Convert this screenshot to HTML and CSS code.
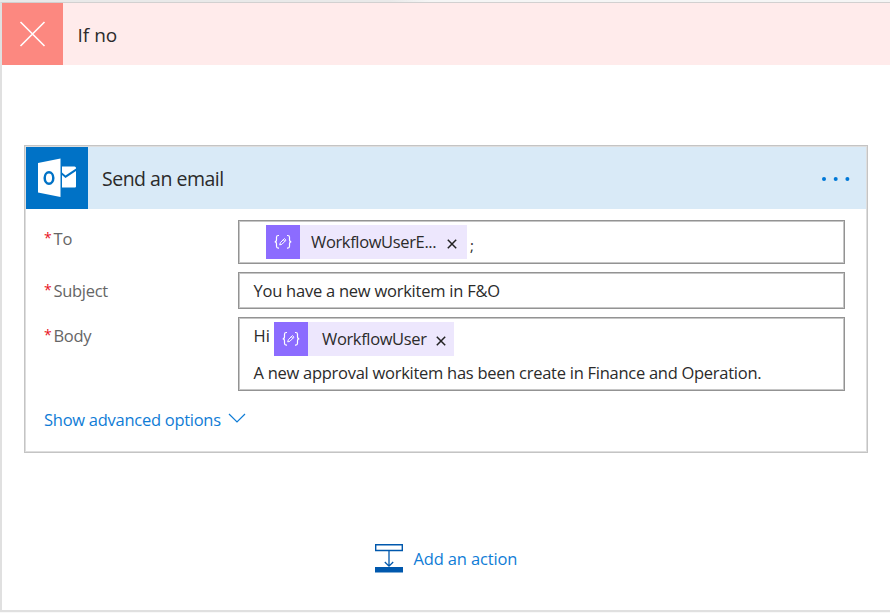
FILE: index.html
```
<!DOCTYPE html>
<html lang="en">
<head>
<meta charset="utf-8">
<title>If no</title>
<link rel="stylesheet" href="styles.css">
</head>
<body>
<main class="branch">
  <header class="branch-head">
    <div class="branch-icon">
      <svg width="61" height="62" viewBox="0 0 61 62"><path d="M18.500 19 42.500 43M42.500 19 18.500 43" stroke="#fff" stroke-width="1.600" fill="none"/></svg>
    </div>
    <h1 class="branch-title"><span>If no</span></h1>
  </header>
  <section class="card">
    <header class="card-head">
      <svg class="outlook" width="62" height="62" viewBox="0 0 62 62">
        <path d="M12 16 34.500 11.500V50L12 45.500Z" fill="#fff"/>
        <ellipse cx="23" cy="31" rx="4.300" ry="5.700" fill="none" stroke="#0072c6" stroke-width="2.500"/>
        <path d="M36 19.500H48.500Q50 19.500 50 21V21.500L39.500 28.500 36 25.500Z" fill="#fff"/>
        <path d="M36 28 39.500 31 50 24V39.500Q50 40.500 49 40.500H36Z" fill="#fff"/>
      </svg>
      <h2 class="card-title"><span>Send an email</span></h2>
      <svg class="more" width="30" height="6" viewBox="0 0 30 6" fill="#0078d7"><circle cx="3" cy="3" r="2"/><circle cx="14.700" cy="3" r="2"/><circle cx="26.400" cy="3" r="2"/></svg>
    </header>
    <div class="form">
      <div class="label to-label"><b>*</b><span class="t-to">To</span></div>
      <div class="field to-field">
        <div class="token">
          <svg class="token-icon" viewBox="0 0 34 34"><g fill="none" stroke="#fff" stroke-width="1.200"><path d="M13 10.500h-.7q-1.800 0-1.800 1.800v2.500q0 2-1.800 2 1.800 0 1.800 2v2.500q0 1.800 1.800 1.800h.7M21 10.500h.7q1.800 0 1.800 1.800v2.500q0 2 1.800 2-1.800 0-1.800 2v2.500q0 1.800-1.800 1.800H21"/><path stroke-width="1" d="m13.700 19.900.6-2.200 4.100-4.100 1.600 1.600-4.100 4.100zM17.300 14.700l1.600 1.600"/></g></svg>
          <span class="token-text t-usere">WorkflowUserE...</span>
          <svg class="remove" width="10" height="10" viewBox="0 0 10 10"><path d="m.8.800 8.400 8.400M9.200.800.800 9.200" stroke="#222" stroke-width="1.500"/></svg>
        </div>
        <span class="semi">;</span>
      </div>
      <div class="label subject-label"><b>*</b><span class="t-subject">Subject</span></div>
      <div class="field subject-field"><span class="t-have">You have a new workitem in F&amp;O</span></div>
      <div class="label body-label"><b>*</b><span class="t-body">Body</span></div>
      <div class="field body-field">
        <div class="line">
          <span class="hi">Hi</span>
          <div class="token token-user">
            <svg class="token-icon" viewBox="0 0 34 34"><g fill="none" stroke="#fff" stroke-width="1.200"><path d="M13 10.500h-.7q-1.800 0-1.800 1.800v2.500q0 2-1.800 2 1.800 0 1.800 2v2.500q0 1.800 1.800 1.800h.7M21 10.500h.7q1.800 0 1.800 1.800v2.500q0 2 1.800 2-1.800 0-1.800 2v2.500q0 1.800-1.800 1.800H21"/><path stroke-width="1" d="m13.700 19.900.6-2.200 4.100-4.100 1.600 1.600-4.100 4.100zM17.300 14.700l1.600 1.600"/></g></svg>
            <span class="token-text t-user">WorkflowUser</span>
            <svg class="remove" width="10" height="10" viewBox="0 0 10 10"><path d="m.8.800 8.400 8.400M9.200.800.800 9.200" stroke="#222" stroke-width="1.500"/></svg>
          </div>
        </div>
        <div class="message"><span class="t-msg">A new approval workitem has been create in Finance and Operation.</span></div>
      </div>
    </div>
    <a class="advanced"><span class="t-adv">Show advanced options</span><svg width="18" height="11" viewBox="0 0 18 11"><path d="m1 1 8 8 8-8" fill="none" stroke="#0f7cd6" stroke-width="1.200"/></svg></a>
  </section>
  <a class="add">
    <svg width="28" height="29" viewBox="0 0 28 29"><path d="M.7.800H27.300V6.500H.7Z" fill="#fff" stroke="#0058ad" stroke-width="1.400"/><path d="M14 7V22M9.800 18 14 22.200 18.200 18" fill="none" stroke="#0058ad" stroke-width="1.300"/><path d="M0 23H28V28.500H0Z" fill="#0058ad"/></svg>
    <span class="t-add">Add an action</span>
  </a>
</main>
</body>
</html>
```
FILE: styles.css
```
* { box-sizing: border-box; }
body {
  margin: 0;
  height: 613px;
  overflow: hidden;
  padding-top: 2px;
  background: linear-gradient(90deg, #e9e9e9 0 390px, #f5f5f5 430px) top / 100% 2px no-repeat #f8f8f8;
  font: 16.5px/22px "Open Sans", "Noto Sans", sans-serif;
  color: #2b2b2b;
}
svg { display: block; flex: none; }
h1, h2 { margin: 0; font-weight: 400; }
span { white-space: nowrap; }
.branch {
  height: 610px;
  background: #fff;
  border: solid #e0e0e0;
  border-width: 1px 0 2px 2px;
  border-top-color: #d2d0d0;
  display: flex;
  flex-direction: column;
  align-items: flex-start;
}
.branch-head { display: flex; width: 100%; height: 62px; background: #ffebeb; }
.branch-icon { width: 61px; background: #fc8880; }
.branch-title { padding: 19px 0 0 14.500px; font-size: 19px; line-height: 26px; }
.card {
  width: 844px;
  height: 308px;
  margin: 80px 0 0 22px;
  border: 1px solid #c4c4c4;
  box-shadow: inset 0 0 0 1px #dedede;
}
.card-head { display: flex; height: 62px; margin: 1px 1px 0; background: #d9eaf7; }
.outlook { background: #0072c6; }
.card-title { flex: 1; padding: 19px 0 0 14px; font-size: 19.5px; line-height: 26px; letter-spacing: -.5px; }
.more { margin: 29px 15px 0 0; }
.form {
  display: grid;
  grid-template-columns: 194px 607px;
  grid-template-rows: 44px 37px 74px;
  row-gap: 8px;
  padding: 11px 0 0 19px;
}
.label { display: flex; color: #666; }
.label b { width: 9.500px; color: #e81123; font-weight: 400; font-size: 14px; line-height: 20px; }
.to-label, .subject-label, .body-label { padding-top: 8px; }
.field { border: 1px solid #939393; box-shadow: inset 0 0 0 1px #c6c6c6; }
.to-field { display: flex; padding: 4px 0 0 27px; }
.subject-field { padding: 7px 0 0 14.500px; }
.body-field { padding: 4px 0 0 14.500px; }
.token { display: flex; align-items: center; width: 201px; height: 34px; background: #ede7fd; }
.token-icon { width: 34px; height: 34px; background: #8c6cff; }
.token-text { flex: 1; padding-left: 11px; }
.remove { margin: 3px 10px 0 0; }
.semi { padding: 9px 0 0 3px; font-size: 15px; }
.line { display: flex; }
.hi { width: 20.500px; padding-top: 3px; }
.token-user { width: 180px; }
.token-user .token-text { padding-left: 14px; }
.token-user .remove { margin: 4px 8px 0 0; }
.message { padding-top: 6px; }
.advanced { display: flex; width: 203px; padding: 18px 0 0 19px; color: #0f7cd6; }
.advanced svg { margin: 4px 0 0 7px; }
.add { display: flex; align-items: flex-start; margin: 91px 0 0 373px; color: #0f7cd6; }
.add span { margin: 4px 0 0 10.500px; }
.t-usere, .t-user { letter-spacing: -.36px; }
.t-subject, .t-body { letter-spacing: -.3px; }
.t-have { letter-spacing: -.24px; }
.t-msg, .t-adv { letter-spacing: -.27px; }
.t-add { letter-spacing: -.15px; }
```
